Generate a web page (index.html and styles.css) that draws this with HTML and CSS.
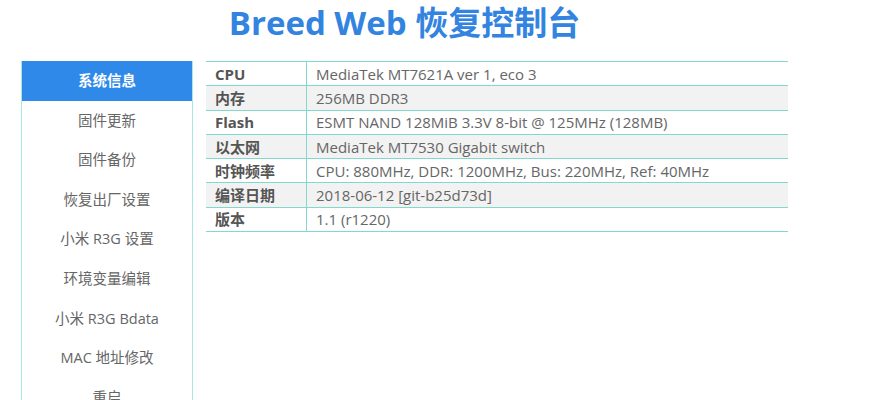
FILE: index.html
```html
<!DOCTYPE html>
<html lang="zh-CN">
<head>
<meta charset="utf-8">
<title>Breed Web 恢复控制台</title>
<link rel="stylesheet" href="styles.css">
</head>
<body>
<div class="page">
  <h1 class="title">Breed Web 恢复控制台</h1>
  <div class="main">
    <ul class="nav">
      <li class="nav-item active">系统信息</li>
      <li class="nav-item">固件更新</li>
      <li class="nav-item">固件备份</li>
      <li class="nav-item">恢复出厂设置</li>
      <li class="nav-item">小米 R3G 设置</li>
      <li class="nav-item">环境变量编辑</li>
      <li class="nav-item">小米 R3G Bdata</li>
      <li class="nav-item">MAC 地址修改</li>
      <li class="nav-item">重启</li>
    </ul>
    <table class="info">
      <tr><th>CPU</th><td>MediaTek MT7621A ver 1, eco 3</td></tr>
      <tr><th>内存</th><td>256MB DDR3</td></tr>
      <tr><th>Flash</th><td>ESMT NAND 128MiB 3.3V 8-bit @ 125MHz (128MB)</td></tr>
      <tr><th>以太网</th><td>MediaTek MT7530 Gigabit switch</td></tr>
      <tr><th>时钟频率</th><td>CPU: 880MHz, DDR: 1200MHz, Bus: 220MHz, Ref: 40MHz</td></tr>
      <tr><th>编译日期</th><td>2018-06-12 [git-b25d73d]</td></tr>
      <tr><th>版本</th><td>1.1 (r1220)</td></tr>
    </table>
  </div>
</div>
</body>
</html>
```
FILE: styles.css
```css
html, body {
  margin: 0;
  padding: 0;
  background: #ffffff;
}
body {
  font-family: "Open Sans", "Noto Sans CJK SC", sans-serif;
  color: #666666;
}
.page {
  width: 767px;
  margin-left: 21px;
}
.title {
  margin: 0;
  height: 61px;
  text-align: center;
  font-family: "Open Sans", "Noto Sans CJK SC", sans-serif;
  font-weight: 700;
  font-size: 33px;
  line-height: 46px;
  color: #3384e0;
}
.main {
  display: flex;
  align-items: flex-start;
  gap: 13px;
}
.nav {
  list-style: none;
  margin: 0;
  padding: 0;
  width: 170px;
  border-left: 1px solid #a8e6e0;
  border-right: 1px solid #a8e6e0;
  flex: none;
}
.nav-item {
  height: 39.6px;
  line-height: 39.6px;
  text-align: center;
  font-size: 14.5px;
  color: #666666;
}
.nav-item.active {
  background: #2f89e8;
  color: #ffffff;
  font-weight: 700;
}
.info {
  flex: 1;
  border-collapse: collapse;
  font-size: 15px;
}
.info tr {
  height: 24.3px;
}
.info tr:nth-child(even) {
  background: #f2f2f2;
}
.info th, .info td {
  border-top: 1px solid #80d9cc;
  border-bottom: 1px solid #80d9cc;
  padding: 0 9px;
  text-align: left;
  line-height: 22px;
  white-space: nowrap;
}
.info th {
  width: 82px;
  font-weight: 700;
  color: #555555;
  border-right: 1px solid #80d9cc;
}
.info td {
  color: #666666;
}
```
